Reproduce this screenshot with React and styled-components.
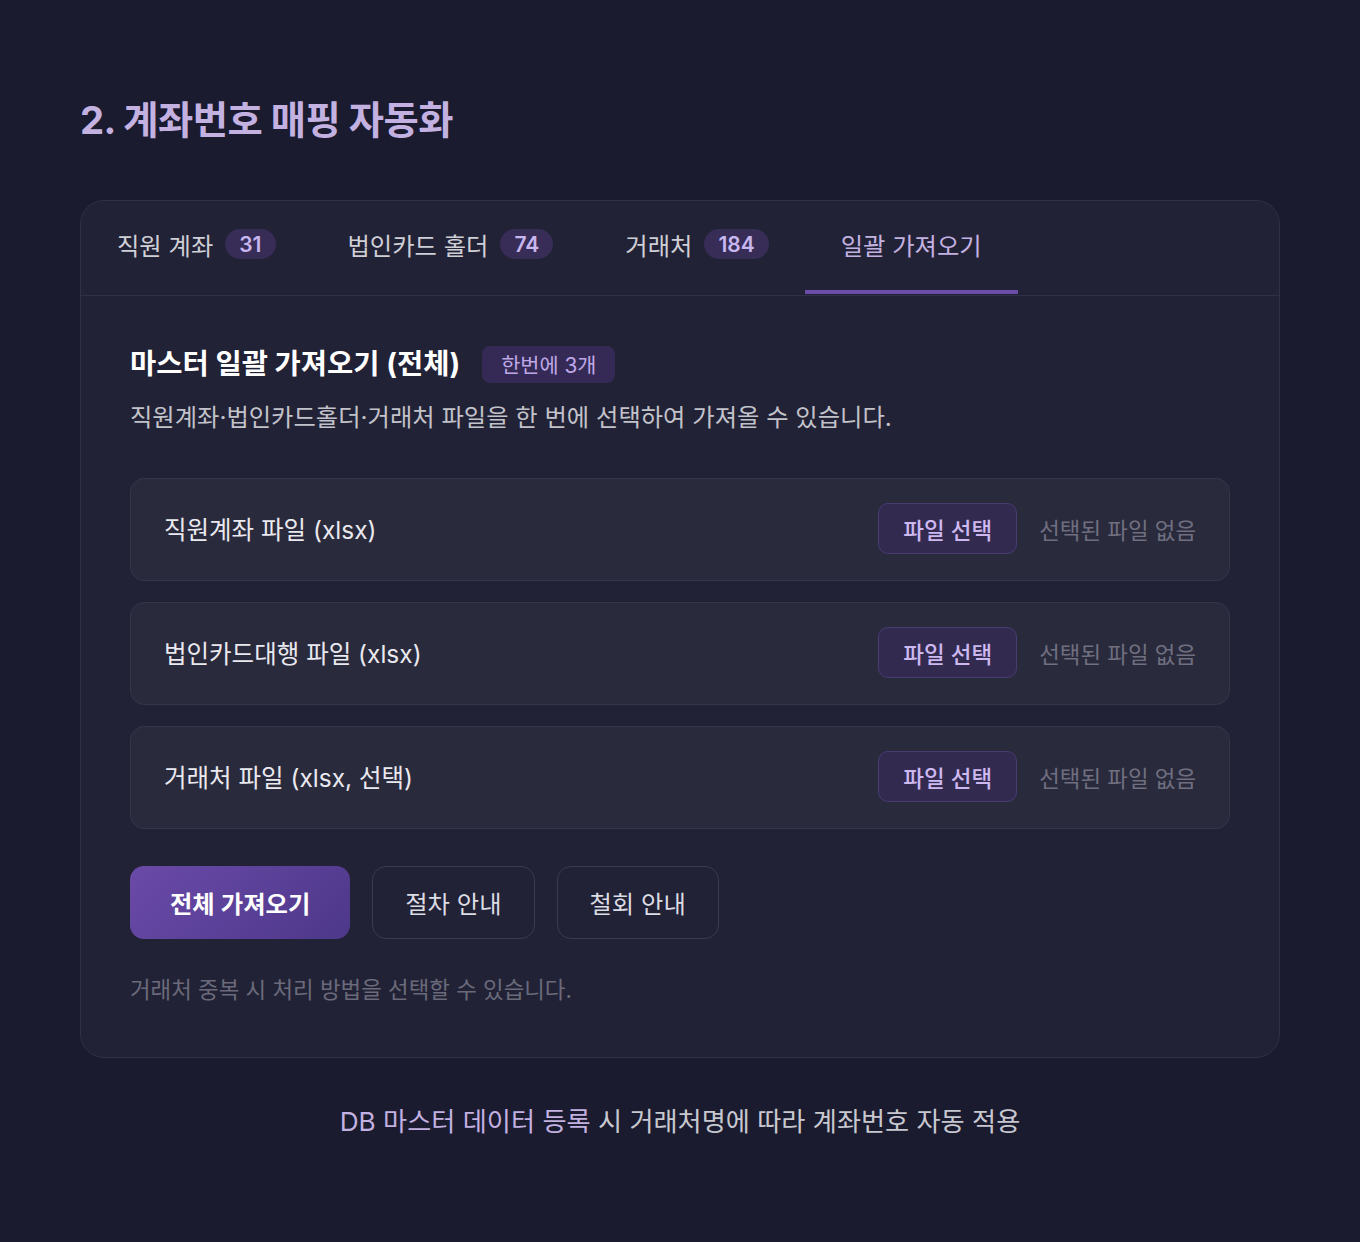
import React, { useState } from "react";
import styled, { createGlobalStyle } from "styled-components";

const Global = createGlobalStyle`
  html, body { margin: 0; padding: 0; background: #1b1b2f; }
  body { font-family: Inter, "Noto Sans CJK KR", "Noto Sans", sans-serif; }
  * { box-sizing: border-box; }
`;

const Page = styled.div`
  min-height: 1242px;
  background: #1b1b2f;
  padding: 96px 80px 0;
`;

const Title = styled.h1`
  margin: 0 0 56px;
  font-size: 38.3px;
  font-weight: 700;
  line-height: 48px;
  color: #c3b1e1;
  letter-spacing: -0.5px;
`;

const Card = styled.div`
  background: #222236;
  border: 1px solid #303046;
  border-radius: 24px;
  overflow: hidden;
`;

const Tabs = styled.div`
  display: flex;
  height: 95px;
  border-bottom: 1px solid #303046;
`;

const Tab = styled.div`
  display: flex;
  align-items: center;
  gap: 12px;
  padding: 0 36px 8px;
  font-size: 24.3px;
  color: ${(p) => (p.$active ? "#c3b1e1" : "#cfcfd6")};
  position: relative;
  &::after {
    content: "";
    display: ${(p) => (p.$active ? "block" : "none")};
    position: absolute;
    left: 0;
    right: 0;
    bottom: 1px;
    height: 4px;
    background: #6b4ca8;
  }
`;

const Count = styled.span`
  display: inline-flex;
  align-items: center;
  height: 30px;
  padding: 0 14px;
  border-radius: 15px;
  background: #372d57;
  color: #c8b6ee;
  font-size: 21px;
  font-weight: 600;
`;

const Body = styled.div`
  padding: 48px 49px 51px;
`;

const HeadRow = styled.div`
  display: flex;
  align-items: center;
  gap: 22px;
`;

const SubTitle = styled.h2`
  margin: 0;
  font-size: 28.5px;
  font-weight: 700;
  color: #ffffff;
  line-height: 40px;
`;

const Pill = styled.span`
  display: inline-flex;
  align-items: center;
  height: 37px;
  padding: 0 19px;
  border-radius: 8px;
  background: #352a55;
  color: #bfa8e8;
  font-size: 20.8px;
`;

const Desc = styled.p`
  margin: 16px 0 44px;
  font-size: 24.3px;
  line-height: 34px;
  color: #c2c2ca;
`;

const Rows = styled.div`
  display: flex;
  flex-direction: column;
  gap: 21px;
`;

const Row = styled.div`
  display: flex;
  align-items: center;
  height: 103px;
  padding: 0 33px 2px;
  background: #2a2a3d;
  border: 1px solid #36364b;
  border-radius: 14px;
`;

const RowLabel = styled.span`
  flex: 1;
  font-size: 24.5px;
  color: #e9e9ef;
`;

const FileButton = styled.button`
  height: 51px;
  width: 139px;
  border-radius: 10px;
  background: #332a50;
  border: 1.5px solid #483c72;
  color: #cdb8f0;
  font-family: inherit;
  font-size: 22.5px;
  font-weight: 500;
  cursor: pointer;
`;

const NoFile = styled.span`
  margin-left: 22px;
  font-size: 22.4px;
  color: #6f6f80;
`;

const Actions = styled.div`
  display: flex;
  gap: 22px;
  margin-top: 37px;
`;

const Button = styled.button`
  height: 73px;
  padding: 0 ${(p) => (p.$primary ? "40px" : "32px")};
  border-radius: 14px;
  font-family: inherit;
  font-size: 24.3px;
  cursor: pointer;
  ${(p) =>
    p.$primary
      ? `background: linear-gradient(135deg, #6a4aa8 0%, #4d388a 100%);
         border: none; color: #ffffff; font-weight: 600;`
      : `background: transparent; border: 1.5px solid #3a3a50; color: #dcdce4; font-weight: 400;`}
`;

const Note = styled.p`
  margin: 35px 0 0;
  font-size: 22.4px;
  line-height: 32px;
  color: #6a6a7b;
`;

const Caption = styled.p`
  margin: 46px 0 0;
  text-align: center;
  font-size: 26.2px;
  line-height: 36px;
  color: #c8c8d0;
`;

const Accent = styled.span`
  color: #c3b1e1;
`;

const tabs = [
  { label: "직원 계좌", count: 31 },
  { label: "법인카드 홀더", count: 74 },
  { label: "거래처", count: 184 },
  { label: "일괄 가져오기" },
];

const files = ["직원계좌 파일 (xlsx)", "법인카드대행 파일 (xlsx)", "거래처 파일 (xlsx, 선택)"];

export default function App() {
  const [active] = useState(3);
  return (
    <>
      <Global />
      <Page>
        <Title>2. 계좌번호 매핑 자동화</Title>
        <Card>
          <Tabs>
            {tabs.map((t, i) => (
              <Tab key={t.label} $active={i === active}>
                {t.label}
                {t.count != null && <Count>{t.count}</Count>}
              </Tab>
            ))}
          </Tabs>
          <Body>
            <HeadRow>
              <SubTitle>마스터 일괄 가져오기 (전체)</SubTitle>
              <Pill>한번에 3개</Pill>
            </HeadRow>
            <Desc>직원계좌·법인카드홀더·거래처 파일을 한 번에 선택하여 가져올 수 있습니다.</Desc>
            <Rows>
              {files.map((f) => (
                <Row key={f}>
                  <RowLabel>{f}</RowLabel>
                  <FileButton>파일 선택</FileButton>
                  <NoFile>선택된 파일 없음</NoFile>
                </Row>
              ))}
            </Rows>
            <Actions>
              <Button $primary>전체 가져오기</Button>
              <Button>절차 안내</Button>
              <Button>철회 안내</Button>
            </Actions>
            <Note>거래처 중복 시 처리 방법을 선택할 수 있습니다.</Note>
          </Body>
        </Card>
        <Caption>
          <Accent>DB 마스터 데이터 등록</Accent> 시 거래처명에 따라 계좌번호 자동 적용
        </Caption>
      </Page>
    </>
  );
}
